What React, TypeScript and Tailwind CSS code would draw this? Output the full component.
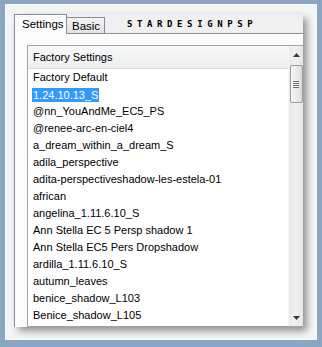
import React from 'react';

const presets = [
  'Factory Default',
  '1.24.10.13_S',
  '@nn_YouAndMe_EC5_PS',
  '@renee-arc-en-ciel4',
  'a_dream_within_a_dream_S',
  'adila_perspective',
  'adita-perspectiveshadow-les-estela-01',
  'african',
  'angelina_1.11.6.10_S',
  'Ann Stella EC 5 Persp shadow 1',
  'Ann Stella EC5 Pers Dropshadow',
  'ardilla_1.11.6.10_S',
  'autumn_leaves',
  'benice_shadow_L103',
  'Benice_shadow_L105',
];

const selected = '1.24.10.13_S';

function ScrollBar() {
  return (
    <div className="w-[15px] shrink-0 flex flex-col items-center border-l border-[#f7f7f7] bg-[linear-gradient(to_right,#e9e9e9,#f1f1f1_40%,#e6e6e6)]">
      <div className="h-[17px] w-full flex items-center justify-center">
        <svg width="7" height="4" viewBox="0 0 7 4">
          <path d="M0 4 L3.5 0 L7 4 Z" fill="#3a3a3a" />
        </svg>
      </div>
      <div className="w-[13px] h-[38px] mt-[2px] rounded-[2px] border border-[#9b9b9b] bg-[linear-gradient(to_right,#f6f6f6,#ebebeb_50%,#d9d9d9)] flex flex-col items-center justify-center gap-[1px]">
        <div className="w-[6px] h-[1px] bg-[#6f6f6f]" />
        <div className="w-[6px] h-[1px] bg-[#6f6f6f]" />
        <div className="w-[6px] h-[1px] bg-[#6f6f6f]" />
        <div className="w-[6px] h-[1px] bg-[#6f6f6f]" />
      </div>
      <div className="flex-1" />
      <div className="h-[17px] w-full flex items-center justify-center">
        <svg width="7" height="4" viewBox="0 0 7 4">
          <path d="M0 0 L3.5 4 L7 0 Z" fill="#3a3a3a" />
        </svg>
      </div>
    </div>
  );
}

export default function App() {
  return (
    <div className="w-[322px] h-[347px] bg-[#8aa6c2] pt-[4px] pl-[5px] pr-[5px] pb-[7px] font-['Liberation_Sans',Arial,sans-serif] text-[11px] text-black">
      <div className="h-full bg-[#f3f4f6] border border-[#fbfcfd] pt-[9px] pl-[8px]">
        <div className="w-[289px] h-[313px] bg-[#f0f0f0] shadow-[4px_4px_7px_rgba(0,0,0,0.4)] flex flex-col overflow-hidden">
          <div className="flex items-end h-[20px] shrink-0">
            <div className="w-[53px] h-[20px] bg-[#fcfcfc] border border-b-0 border-[#898c95] pl-[7px] leading-[19px] text-[11.5px]">
              Settings
            </div>
            <div className="w-[38px] h-[17px] bg-[linear-gradient(#f3f3f3,#e4e4e4)] border border-l-0 border-[#898c95] pl-[5px] leading-[16px] text-[11.5px]">
              Basic
            </div>
            <div className="flex-1 h-[20px] border-b border-[#898c95] pl-[22px] flex items-center pt-[1px]">
              <span className="font-['DejaVu_Sans_Mono',monospace] font-bold text-[9px] tracking-[4.6px] leading-none">
                STARDESIGNPSP
              </span>
            </div>
          </div>
          <div className="flex-1 min-h-0 flex flex-col bg-[#fcfcfc] border-l border-[#898c95] pl-[12px] pt-[11px]">
            <div className="flex-1 min-h-0 flex border-t border-l border-b border-[#a0a3a8] bg-white">
              <div className="flex-1 min-w-0 flex flex-col">
                <div className="h-[23px] shrink-0 flex items-center pl-[5px] bg-[linear-gradient(#f9f9f9,#eceef0)] border-b border-[#d6d8db]">
                  Factory Settings
                </div>
                {presets.map((p) => (
                  <div key={p} className="h-[17px] shrink-0 flex items-center pl-[4px] whitespace-nowrap">
                    {p === selected ? (
                      <span className="bg-[#3399ff] text-white px-[1px] leading-[14px]">{p}</span>
                    ) : (
                      <span className="px-[1px]">{p}</span>
                    )}
                  </div>
                ))}
              </div>
              <ScrollBar />
            </div>
          </div>
        </div>
      </div>
    </div>
  );
}
